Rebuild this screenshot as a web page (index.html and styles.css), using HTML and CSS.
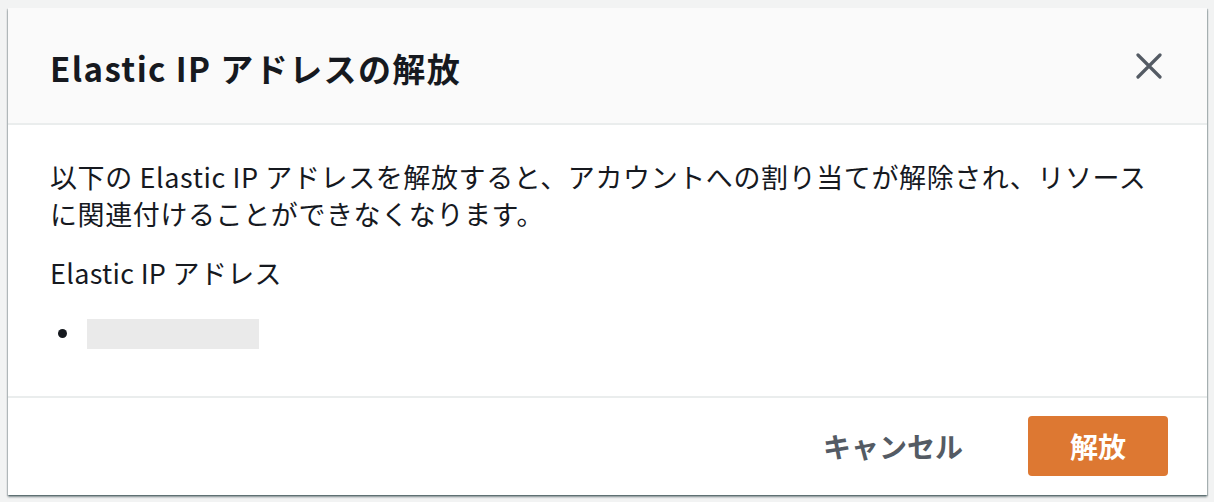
FILE: index.html
```html
<!DOCTYPE html>
<html lang="ja">
<head>
<meta charset="utf-8">
<title>Elastic IP アドレスの解放</title>
<link rel="stylesheet" href="styles.css">
</head>
<body>
<div class="modal">
  <div class="modal-header">
    <h2 class="modal-title">Elastic IP アドレスの解放</h2>
    <button class="close-btn" aria-label="閉じる">
      <svg width="26" height="26" viewBox="0 0 26 26"><path d="M2 2 L24 24 M24 2 L2 24" stroke="#545b64" stroke-width="3.2" stroke-linecap="round" fill="none"/></svg>
    </button>
  </div>
  <div class="modal-body">
    <p class="desc">以下の Elastic IP アドレスを解放すると、アカウントへの割り当てが解除され、リソースに関連付けることができなくなります。</p>
    <p class="label">Elastic IP アドレス</p>
    <ul class="ip-list">
      <li class="ip-item"><span class="bullet"></span><span class="ip-placeholder"></span></li>
    </ul>
  </div>
  <div class="modal-footer">
    <button class="btn-cancel">キャンセル</button>
    <button class="btn-primary">解放</button>
  </div>
</div>
</body>
</html>
```

FILE: styles.css
```css
html, body {
  margin: 0;
  padding: 0;
}
body {
  background: #f2f3f3;
  font-family: "Noto Sans CJK JP", "Noto Sans", sans-serif;
  color: #16191f;
  padding: 8px 7px 0 8px;
  height: 502px;
  box-sizing: border-box;
}
.modal {
  background: #ffffff;
  box-shadow: 0 2px 2px 0 rgba(0, 28, 36, 0.45), 1px 1px 1px 0 rgba(0, 28, 36, 0.2), -1px 1px 1px 0 rgba(0, 28, 36, 0.15);
}
.modal-header {
  height: 115px;
  background: #fafafa;
  border-bottom: 2px solid #eaeded;
  display: flex;
  align-items: center;
  justify-content: space-between;
  padding: 0 45px 0 42px;
}
.modal-title {
  margin: 0;
  font-size: 33px;
  letter-spacing: 1.4px;
  font-weight: 700;
  line-height: 40px;
  padding-top: 4px;
}
.close-btn {
  border: 0;
  background: none;
  padding: 0;
  width: 26px;
  height: 26px;
  display: flex;
}
.modal-body {
  padding: 33px 39px 44px 42px;
}
.desc {
  margin: 0;
  font-size: 27px;
  letter-spacing: 0.6px;
  line-height: 37px;
}
.label {
  margin: 22px 0 0;
  font-size: 27px;
  letter-spacing: 0.3px;
  line-height: 37px;
}
.ip-list {
  margin: 24px 0 0;
  padding: 0;
  list-style: none;
}
.ip-item {
  display: flex;
  align-items: center;
  height: 37px;
}
.bullet {
  width: 9px;
  height: 9px;
  border-radius: 50%;
  background: #16191f;
  margin-left: 8px;
}
.ip-placeholder {
  width: 172px;
  height: 30px;
  background: #eaeaea;
  margin-left: 20px;
}
.modal-footer {
  border-top: 2px solid #eaeded;
  display: flex;
  justify-content: flex-end;
  align-items: center;
  padding: 18px 39px 19px;
}
.btn-cancel {
  border: 0;
  background: none;
  font-family: inherit;
  font-size: 28px;
  font-weight: 700;
  color: #545b64;
  padding: 0;
  margin-right: 65px;
}
.btn-primary {
  border: 0;
  width: 140px;
  height: 60px;
  border-radius: 4px;
  background: #dd7832;
  color: #ffffff;
  font-family: inherit;
  font-size: 28px;
  font-weight: 700;
  padding: 0;
}
```
